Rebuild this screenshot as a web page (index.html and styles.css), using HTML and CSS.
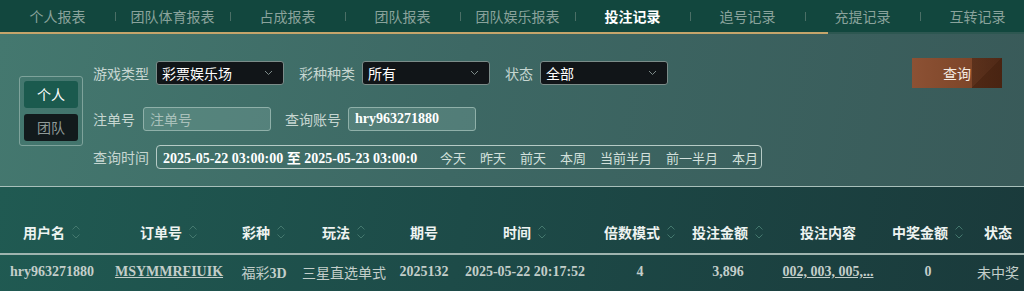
FILE: index.html
```html
<!DOCTYPE html>
<html lang="zh">
<head>
<meta charset="utf-8">
<link rel="stylesheet" href="styles.css">
</head>
<body>
<nav class="tabs">
  <div class="tab">个人报表</div>
  <div class="tab sep">团队体育报表</div>
  <div class="tab sep">占成报表</div>
  <div class="tab sep">团队报表</div>
  <div class="tab sep">团队娱乐报表</div>
  <div class="tab sep active">投注记录</div>
  <div class="tab sep">追号记录</div>
  <div class="tab sep">充提记录</div>
  <div class="tab sep">互转记录</div>
</nav>
<div class="tabline"><div class="gold"></div><div class="rest"></div></div>

<section class="panel">
  <div class="toggle">
    <div class="tbtn on">个人</div>
    <div class="tbtn off">团队</div>
  </div>
  <div class="form">
    <div class="row r1">
      <div class="field"><span class="lbl">游戏类型</span><div class="select"><span>彩票娱乐场</span><svg width="9" height="6" viewBox="0 0 9 6"><path d="M1 1 L4.5 4.5 L8 1" fill="none" stroke="#7d8a88" stroke-width="1"/></svg></div></div>
      <div class="field"><span class="lbl">彩种种类</span><div class="select"><span>所有</span><svg width="9" height="6" viewBox="0 0 9 6"><path d="M1 1 L4.5 4.5 L8 1" fill="none" stroke="#7d8a88" stroke-width="1"/></svg></div></div>
      <div class="field"><span class="lbl short">状态</span><div class="select"><span>全部</span><svg width="9" height="6" viewBox="0 0 9 6"><path d="M1 1 L4.5 4.5 L8 1" fill="none" stroke="#7d8a88" stroke-width="1"/></svg></div></div>
    </div>
    <div class="row r2">
      <div class="field"><span class="lbl">注单号</span><div class="input ph">注单号</div></div>
      <div class="field"><span class="lbl">查询账号</span><div class="input val">hry963271880</div></div>
    </div>
    <div class="row r3">
      <div class="field"><span class="lbl">查询时间</span>
        <div class="daterange">
          <div class="dates">2025-05-22 03:00:00 至 2025-05-23 03:00:0</div>
          <div class="quick">
            <span class="q">今天</span><span class="q">昨天</span><span class="q">前天</span><span class="q">本周</span><span class="q">当前半月</span><span class="q">前一半月</span><span class="q">本月</span>
          </div>
        </div>
      </div>
    </div>
  </div>
  <div class="search">查询</div>
</section>

<section class="tablewrap">
  <table>
    <colgroup>
      <col style="width:104px"><col style="width:130px"><col style="width:60px"><col style="width:100px"><col style="width:60px"><col style="width:142px"><col style="width:88px"><col style="width:88px"><col style="width:112px"><col style="width:88px"><col style="width:52px">
    </colgroup>
    <thead>
      <tr>
        <th><span class="h">用户名<svg class="sort" width="10" height="20" viewBox="0 0 10 20"><path d="M1.5 7.5 L5 4 L8.5 7.5 M1.5 12.5 L5 16 L8.5 12.5" fill="none" stroke="#44786e" stroke-width="1"/></svg></span></th>
        <th><span class="h">订单号<svg class="sort" width="10" height="20" viewBox="0 0 10 20"><path d="M1.5 7.5 L5 4 L8.5 7.5 M1.5 12.5 L5 16 L8.5 12.5" fill="none" stroke="#44786e" stroke-width="1"/></svg></span></th>
        <th><span class="h">彩种<svg class="sort" width="10" height="20" viewBox="0 0 10 20"><path d="M1.5 7.5 L5 4 L8.5 7.5 M1.5 12.5 L5 16 L8.5 12.5" fill="none" stroke="#44786e" stroke-width="1"/></svg></span></th>
        <th><span class="h">玩法<svg class="sort" width="10" height="20" viewBox="0 0 10 20"><path d="M1.5 7.5 L5 4 L8.5 7.5 M1.5 12.5 L5 16 L8.5 12.5" fill="none" stroke="#44786e" stroke-width="1"/></svg></span></th>
        <th><span class="h">期号</span></th>
        <th><span class="h">时间<svg class="sort" width="10" height="20" viewBox="0 0 10 20"><path d="M1.5 7.5 L5 4 L8.5 7.5 M1.5 12.5 L5 16 L8.5 12.5" fill="none" stroke="#44786e" stroke-width="1"/></svg></span></th>
        <th><span class="h">倍数模式<svg class="sort" width="10" height="20" viewBox="0 0 10 20"><path d="M1.5 7.5 L5 4 L8.5 7.5 M1.5 12.5 L5 16 L8.5 12.5" fill="none" stroke="#44786e" stroke-width="1"/></svg></span></th>
        <th><span class="h">投注金额<svg class="sort" width="10" height="20" viewBox="0 0 10 20"><path d="M1.5 7.5 L5 4 L8.5 7.5 M1.5 12.5 L5 16 L8.5 12.5" fill="none" stroke="#44786e" stroke-width="1"/></svg></span></th>
        <th><span class="h">投注内容</span></th>
        <th><span class="h">中奖金额<svg class="sort" width="10" height="20" viewBox="0 0 10 20"><path d="M1.5 7.5 L5 4 L8.5 7.5 M1.5 12.5 L5 16 L8.5 12.5" fill="none" stroke="#44786e" stroke-width="1"/></svg></span></th>
        <th><span class="h">状态</span></th>
      </tr>
    </thead>
    <tbody>
      <tr>
        <td class="num">hry963271880</td>
        <td class="num link">MSYMMRFIUIK</td>
        <td>福彩<span class="num">3D</span></td>
        <td>三星直选单式</td>
        <td class="num">2025132</td>
        <td class="num">2025-05-22 20:17:52</td>
        <td class="num">4</td>
        <td class="num">3,896</td>
        <td class="num link">002, 003, 005,...</td>
        <td class="num">0</td>
        <td>未中奖</td>
      </tr>
    </tbody>
  </table>
</section>
</body>
</html>
```

FILE: styles.css
```css
* { box-sizing: border-box; }
html, body {
  margin: 0;
  padding: 0;
  width: 1024px;
  height: 291px;
  overflow: hidden;
  background: #1c4642;
  font-family: "Noto Sans CJK SC", "Noto Sans", sans-serif;
}

.tabs {
  display: flex;
  height: 32px;
  background: #12473e;
  overflow: hidden;
}
.tab {
  position: relative;
  flex: 0 0 115px;
  text-align: center;
  line-height: 32px;
  font-size: 14px;
  color: #8aa39c;
}
.tab.sep::before {
  content: "";
  position: absolute;
  left: 0;
  top: 12px;
  width: 1px;
  height: 9px;
  background: #4b6f66;
}
.tab.active {
  color: #ffffff;
  font-weight: bold;
}
.tabline {
  display: flex;
  height: 2px;
}
.tabline .gold { width: 828px; background: #c5a56b; }
.tabline .rest { flex: 1; background: #2d5751; }

.panel {
  display: flex;
  align-items: flex-start;
  height: 153px;
  padding: 27px 22px 0 19px;
  background: linear-gradient(100deg, #44786f 0%, #3d6864 45%, #395a59 100%);
  border-bottom: 1px solid #a9c0bb;
}
.toggle {
  margin-top: 15px;
  width: 64px;
  padding: 4px;
  border: 1px solid #7ea39b;
  border-radius: 3px;
  display: flex;
  flex-direction: column;
  gap: 6px;
}
.tbtn {
  height: 27px;
  line-height: 27px;
  text-align: center;
  font-size: 14px;
  border-radius: 3px;
}
.tbtn.on { background: #1b5a4e; color: #ffffff; }
.tbtn.off { background: #121a1c; color: #8f9a98; }

.form {
  margin-left: 10px;
  display: flex;
  flex-direction: column;
}
.row { display: flex; gap: 15px; align-items: center; }
.row.r2 { margin-top: 22px; gap: 14px; }
.row.r3 { margin-top: 14px; }
.field { display: flex; align-items: center; gap: 7px; }
.r2 .field:first-child { gap: 8px; }
.lbl {
  font-size: 14px;
  color: #c6d6d1;
  white-space: nowrap;
}
.select {
  width: 128px;
  height: 24px;
  display: flex;
  align-items: center;
  justify-content: space-between;
  padding: 0 10px 0 5px;
  background: #111518;
  border: 1px solid #7b8c89;
  border-radius: 3px;
  color: #ffffff;
  font-size: 14px;
}
.input {
  width: 128px;
  height: 24px;
  line-height: 22px;
  padding: 0 6px;
  background: rgba(160, 200, 190, 0.22);
  border: 1px solid #8fb0a9;
  border-radius: 3px;
  font-size: 14px;
}
.input.ph { color: #aac1bb; }
.input.val {
  color: #ffffff;
  font-family: "Liberation Serif", serif;
  font-weight: bold;
}
.daterange {
  width: 606px;
  height: 24px;
  display: flex;
  align-items: center;
  border: 1px solid #b6cbc6;
  border-radius: 4px;
  padding-left: 6px;
}
.dates {
  flex: 0 0 265px;
  white-space: nowrap;
  color: #ffffff;
  font-family: "Liberation Serif", "Noto Sans CJK SC", serif;
  font-weight: bold;
  font-size: 14px;
}
.quick {
  display: flex;
  gap: 14px;
  margin-left: 12px;
}
.q {
  font-size: 13px;
  color: #d3e0dc;
  white-space: nowrap;
}

.search {
  margin-left: auto;
  margin-top: -3px;
  width: 90px;
  height: 30px;
  line-height: 30px;
  text-align: center;
  color: #f5ebe2;
  font-size: 14px;
  background:
    linear-gradient(to bottom right, rgba(30, 12, 4, 0.35) 0 50%, rgba(50, 22, 8, 0.6) 50% 100%) right / 30px 30px no-repeat,
    linear-gradient(90deg, #8c5134 0%, #7e4629 65%, #6a3820 100%);
}

.tablewrap {
  height: 104px;
  background: linear-gradient(100deg, #205a52 0%, #1d4b48 45%, #1a3a3b 100%);
}
table {
  width: 1024px;
  table-layout: fixed;
  border-collapse: collapse;
}
th {
  height: 67px;
  padding: 23px 0 0;
  border-bottom: 2px solid #9fb4af;
  font-size: 14px;
  font-weight: bold;
  color: #eef3f1;
  text-align: center;
  vertical-align: middle;
}
.h {
  display: inline-flex;
  align-items: center;
  gap: 6px;
  white-space: nowrap;
}
.sort { display: block; }
td {
  height: 35px;
  text-align: center;
  font-size: 14px;
  color: #c3ceca;
  white-space: nowrap;
  padding: 0;
}
.num {
  font-family: "Liberation Serif", serif;
  font-weight: bold;
}
.link { text-decoration: underline; }
```
